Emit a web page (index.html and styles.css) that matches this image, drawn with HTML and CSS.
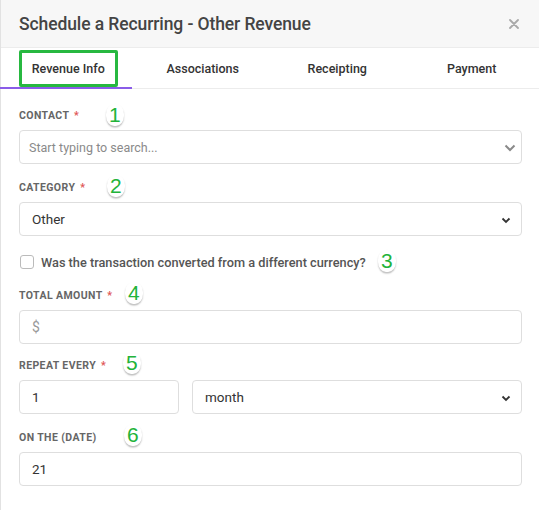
FILE: index.html
```html
<!DOCTYPE html>
<html>
<head>
<meta charset="utf-8">
<link rel="stylesheet" href="styles.css">
</head>
<body>
<div class="modal">
  <div class="header">
    <h1 class="title">Schedule a Recurring - Other Revenue</h1>
    <svg class="close" width="10" height="10" viewBox="0 0 10 10"><path d="M1 1L9 9M9 1L1 9" stroke="#a9a9a9" stroke-width="1.8" stroke-linecap="round"/></svg>
  </div>
  <div class="tabs">
    <div class="tab active">Revenue Info<span class="hl"></span></div>
    <div class="tab">Associations</div>
    <div class="tab">Receipting</div>
    <div class="tab">Payment</div>
  </div>
  <div class="form">
    <div class="field">
      <div class="label">CONTACT <span class="req">*</span><span class="num n1">1</span></div>
      <div class="input search"><span class="ph">Start typing to search...</span>
        <svg class="chev-lg" width="12" height="8" viewBox="0 0 12 8"><path d="M1.5 1.5L6 6L10.5 1.5" fill="none" stroke="#8a8a8a" stroke-width="2"/></svg>
      </div>
    </div>
    <div class="field">
      <div class="label">CATEGORY <span class="req">*</span><span class="num n2">2</span></div>
      <div class="input select"><span class="val">Other</span>
        <svg class="chev" width="10" height="7" viewBox="0 0 10 7"><path d="M1.5 1.5L5 5L8.5 1.5" fill="none" stroke="#333" stroke-width="1.8"/></svg>
      </div>
    </div>
    <div class="check-row">
      <span class="box"></span>
      <span class="check-text">Was the transaction converted from a different currency?</span>
      <span class="num n3">3</span>
    </div>
    <div class="field tight">
      <div class="label">TOTAL AMOUNT <span class="req">*</span><span class="num n4">4</span></div>
      <div class="input"><span class="ph dollar">$</span></div>
    </div>
    <div class="field">
      <div class="label">REPEAT EVERY <span class="req">*</span><span class="num n5">5</span></div>
      <div class="row">
        <div class="input small"><span class="val">1</span></div>
        <div class="input select grow"><span class="val">month</span>
          <svg class="chev" width="10" height="7" viewBox="0 0 10 7"><path d="M1.5 1.5L5 5L8.5 1.5" fill="none" stroke="#333" stroke-width="1.8"/></svg>
        </div>
      </div>
    </div>
    <div class="field">
      <div class="label">ON THE (DATE)<span class="num n6">6</span></div>
      <div class="input"><span class="val">21</span></div>
    </div>
  </div>
</div>
</body>
</html>
```
FILE: styles.css
```css
* { box-sizing: border-box; }
html, body { margin: 0; padding: 0; background: #fff; }
body { font-family: Roboto, "Noto Sans", sans-serif; }
.modal { width: 539px; height: 510px; border-left: 1px solid #e2e2e2; background: #fff; }
.header {
  height: 48px; background: #f7f7f7; border-bottom: 1px solid #ececec;
  display: flex; align-items: center; justify-content: space-between;
  padding: 0 20px 0 18px;
}
.title { margin: 0; font-size: 17.5px; font-weight: 500; color: #444; letter-spacing: -0.1px; }
.close { margin-top: 1px; }
.tabs { display: flex; height: 41px; border-bottom: 1px solid #ececec; }
.tab {
  position: relative; width: 135px; display: flex; align-items: center; justify-content: center;
  font-size: 12.5px; font-weight: 500; color: #333;
}
.tab.active::after {
  content: ""; position: absolute; left: -1px; bottom: -1px; width: 132px; height: 2px; background: #8a5ce8;
}
.hl {
  position: absolute; left: 18px; top: 2px; width: 99px; height: 37px;
  border: 3px solid #27b840; border-radius: 2px;
}
.form { padding: 19px 17px 0 18px; }
.field { margin-bottom: 16px; }
.field.tight { margin-bottom: 14px; }
.label {
  position: relative; height: 16px; line-height: 16px; margin-bottom: 6px;
  font-size: 10.5px; font-weight: 700; color: #666; letter-spacing: 0.4px;
}
.req { color: #e05555; margin-left: 2px; }
.num {
  position: absolute; top: -6px; font-family: "Liberation Sans", Arial, sans-serif;
  font-size: 21px; line-height: 22px; color: #22b33a; font-weight: 400;
  background: #fff; border-radius: 45%; padding: 0 3px;
  box-shadow: 0 1.5px 1.5px rgba(0,0,0,0.25);
}
.n1 { left: 87px; top: -4px; }
.n2 { left: 88px; top: -5px; }
.n4 { left: 106px; top: -6px; }
.n5 { left: 104px; top: -6px; }
.n6 { left: 105px; top: -6px; }
.input {
  position: relative; height: 34px; border: 1px solid #dedede; border-radius: 4px;
  display: flex; align-items: center; padding: 0 12px; background: #fff;
}
.input.search { padding-left: 9px; }
.ph { font-size: 12.5px; color: #8a8a8a; }
.dollar { font-size: 14px; color: #999; }
.val { font-size: 13.5px; color: #333; }
.chev-lg { position: absolute; right: 5px; top: 13px; }
.chev { position: absolute; right: 10px; top: 14px; }
.row { display: flex; gap: 13px; }
.small { width: 160px; }
.grow { flex: 1; }
.check-row {
  position: relative; display: flex; align-items: center; height: 16px;
  margin-top: 18px; margin-bottom: 18px;
}
.box { width: 14px; height: 14px; border: 1px solid #bbb; border-radius: 3px; margin-left: 1px; }
.check-text { margin-left: 7px; font-size: 12.75px; font-weight: 500; color: #555; }
.n3 { position: absolute; left: 359px; top: -4px; }
```
